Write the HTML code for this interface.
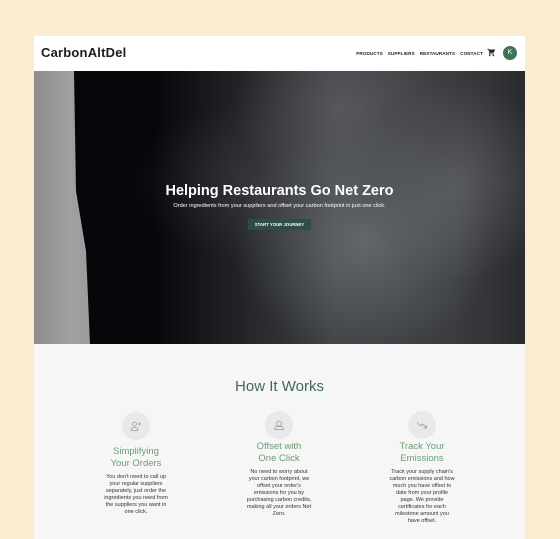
<!DOCTYPE html>
<html><head><meta charset="utf-8"><style>
*{margin:0;padding:0;box-sizing:border-box}
body{width:560px;height:539px;background:#fbebd0;font-family:"Liberation Sans",sans-serif;overflow:hidden;position:relative}
.card{position:absolute;left:34px;top:36px;width:491px;height:503px;background:#f6f6f6;overflow:hidden}
.hdr{height:35px;background:#fff;position:relative}
.logo{position:absolute;left:7px;top:9px;font-size:13px;font-weight:bold;color:#1b1b1b;letter-spacing:0.2px}
.nav{position:absolute;right:42px;top:15px;font-size:4.6px;font-weight:bold;color:#222;letter-spacing:0.1px}
.nav span{margin-left:5px}
.cart{position:absolute right:29px;top:12px}
.cart{position:absolute;right:29px;top:12px}
.av{position:absolute;right:8px;top:10px;width:14px;height:14px;border-radius:50%;background:#3f7358;color:#fff;font-size:7px;text-align:center;line-height:14px}
.hero{position:absolute;top:35px;left:0;width:491px;height:273px;background:
radial-gradient(ellipse 130px 120px at 330px 170px,rgba(130,135,140,.55),rgba(60,62,66,0) 100%),
radial-gradient(ellipse 110px 90px at 310px 40px,rgba(110,112,118,.5),rgba(60,62,66,0) 100%),
radial-gradient(ellipse 90px 100px at 430px 110px,rgba(120,122,128,.45),rgba(60,62,66,0) 100%),
radial-gradient(ellipse 120px 80px at 220px 110px,rgba(70,72,78,.45),rgba(40,40,44,0) 100%),
linear-gradient(90deg,#06070b 0,#06070b 120px,#202226 200px,#3e4044 300px,#3a3c40 420px,#2a2b2e 491px)}
.strip{position:absolute;left:0;top:0;width:60px;height:273px;background:linear-gradient(90deg,#8c8c8c,#a0a0a0 60%,#9a9a9a);clip-path:polygon(0 0,40px 0,42px 120px,52px 180px,56px 273px,0 273px)}
.hero h1{position:absolute;top:112px;width:100%;text-align:center;color:#fff;font-size:14.5px;font-weight:bold}
.hero p{position:absolute;top:132px;width:100%;text-align:center;color:#fff;font-size:5.6px}
.btn{position:absolute;left:214px;top:148px;width:63px;height:11px;background:#2e4d45;color:#fff;font-size:4.3px;font-weight:bold;text-align:center;line-height:11px;border-radius:1px}
.how{position:absolute;top:342px;width:100%;text-align:center;color:#3e6b55;font-size:15px}
.col{position:absolute;width:80px;text-align:center}
.circ{width:28px;height:28px;border-radius:50%;background:#e9e9e9;margin:0 auto;display:flex;align-items:center;justify-content:center}
.col h3{font-weight:normal;color:#6a9d76;font-size:9.5px;line-height:11.5px;margin-top:6px}
.col p{font-size:5.5px;line-height:7px;color:#333;margin:5px auto 0;width:66px}
</style></head><body>
<div class="card">
<div class="hdr">
<div class="logo">CarbonAltDel</div>
<div class="nav"><span>PRODUCTS</span><span>SUPPLIERS</span><span>RESTAURANTS</span><span>CONTACT</span></div>
<svg class="cart" width="9" height="9" viewBox="0 0 24 24"><path fill="#222" d="M7 18c-1.1 0-2 .9-2 2s.9 2 2 2 2-.9 2-2-.9-2-2-2zM1 2v2h2l3.6 7.6-1.4 2.4C5 15.3 6 17 7 17h12v-2H7.4l1.1-2h7.5c.8 0 1.4-.4 1.7-1l3.6-6.5c.4-.7-.1-1.5-.9-1.5H5.2l-.9-2H1zm16 16c-1.1 0-2 .9-2 2s.9 2 2 2 2-.9 2-2-.9-2-2-2z"/></svg>
<div class="av">K</div>
</div>
<div class="hero">
<div class="strip"></div>
<h1>Helping Restaurants Go Net Zero</h1>
<p>Order ingredients from your suppliers and offset your carbon footprint in just one click.</p>
<div class="btn">START YOUR JOURNEY</div>
</div>
<div class="how">How It Works</div>
<div class="col" style="left:62px;top:376px">
<div class="circ"><svg width="12" height="12" viewBox="0 0 24 24" fill="none" stroke="#999" stroke-width="1.5"><circle cx="9" cy="8" r="4"/><path d="M2 21c0-4 3-6 7-6s7 2 7 6z"/><path d="M19 5v6M16 8h6"/></svg></div>
<h3>Simplifying<br>Your Orders</h3>
<p>You don't need to call up your regular suppliers separately, just order the ingredients you need from the suppliers you want in one click.</p>
</div>
<div class="col" style="left:205px;top:375px">
<div class="circ"><svg width="12" height="12" viewBox="0 0 24 24" fill="none" stroke="#999" stroke-width="1.5"><circle cx="12" cy="9" r="5"/><path d="M3 21l3-6h12l3 6z"/></svg></div>
<h3 style="margin-top:2px">Offset with<br>One Click</h3>
<p>No need to worry about your carbon footprint, we offset your order's emissions for you by purchasing carbon credits, making all your orders Net Zero.</p>
</div>
<div class="col" style="left:348px;top:375px">
<div class="circ"><svg width="12" height="12" viewBox="0 0 24 24" fill="none" stroke="#999" stroke-width="1.6"><path d="M2 7l7 7 4-4 8 8M21 12v6h-6"/></svg></div>
<h3 style="margin-top:2px">Track Your<br>Emissions</h3>
<p>Track your supply chain's carbon emissions and how much you have offset to date from your profile page. We provide certificates for each milestone amount you have offset.</p>
</div>
</div>
</body></html>
